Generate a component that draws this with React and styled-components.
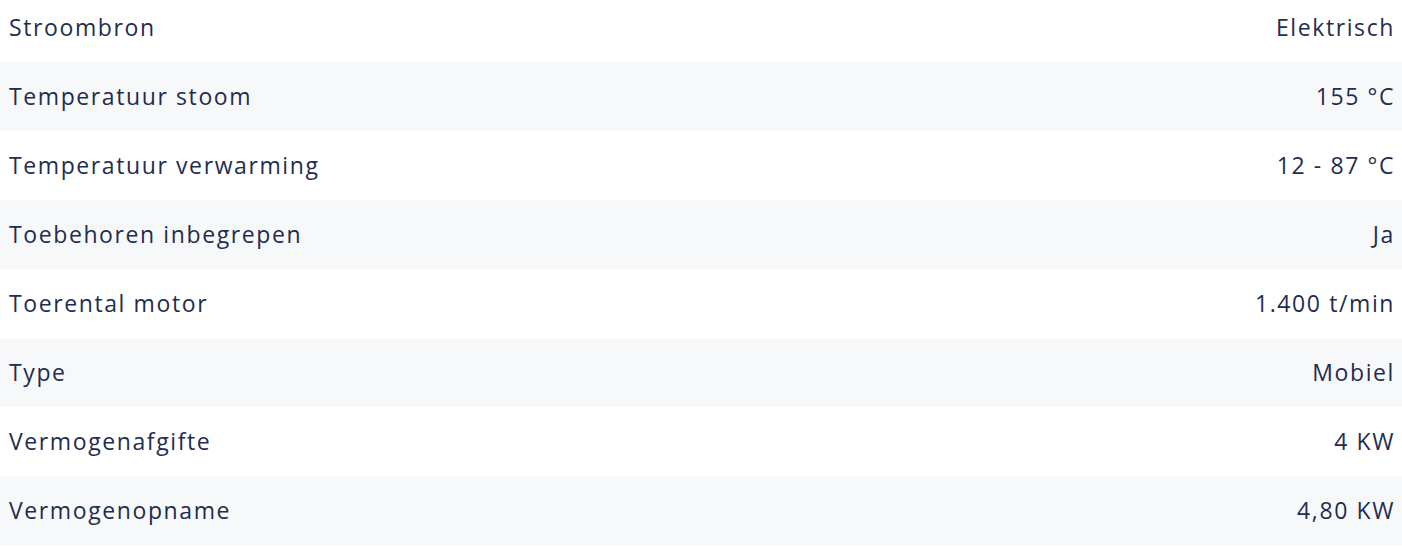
import React from "react";
import styled, { createGlobalStyle } from "styled-components";

const GlobalStyle = createGlobalStyle`
  html, body {
    margin: 0;
    padding: 0;
    background: #fff;
    overflow: hidden;
  }
`;

const SpecList = styled.dl`
  margin: -7px 0 0 0;
  padding: 0;
  width: 1402px;
  font-family: "Open Sans", "Noto Sans", sans-serif;
  font-size: 23px;
  letter-spacing: 1.6px;
  color: #1f2d4f;
`;

const SpecRow = styled.div`
  display: flex;
  justify-content: space-between;
  align-items: center;
  height: 69px;
  padding: 0 7px 1px 9px;
  box-sizing: border-box;
  background: ${(p) => (p.$striped ? "#f7f8fa" : "#ffffff")};
`;

const Label = styled.dt`
  margin: 0;
  font-weight: 400;
`;

const Value = styled.dd`
  margin: 0;
  text-align: right;
`;

const specs = [
  ["Stroombron", "Elektrisch"],
  ["Temperatuur stoom", "155 °C"],
  ["Temperatuur verwarming", "12 - 87 °C"],
  ["Toebehoren inbegrepen", "Ja"],
  ["Toerental motor", "1.400 t/min"],
  ["Type", "Mobiel"],
  ["Vermogenafgifte", "4 KW"],
  ["Vermogenopname", "4,80 KW"],
];

export default function App() {
  return (
    <>
      <GlobalStyle />
      <SpecList>
        {specs.map(([label, value], i) => (
          <SpecRow key={label} $striped={i % 2 === 1}>
            <Label>{label}</Label>
            <Value>{value}</Value>
          </SpecRow>
        ))}
      </SpecList>
    </>
  );
}
